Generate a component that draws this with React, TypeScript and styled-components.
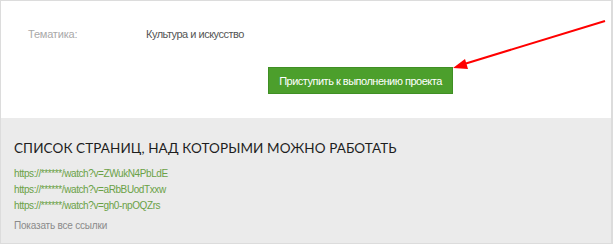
import styled, { createGlobalStyle } from 'styled-components';

const GlobalStyle = createGlobalStyle`
  html, body {
    margin: 0;
    padding: 0;
    background: #ffffff;
  }
  body {
    font-family: 'Liberation Sans', Arial, sans-serif;
  }
`;

const Frame = styled.div`
  position: relative;
  width: 613px;
  height: 244px;
  box-sizing: border-box;
  border: 1px solid #dcdcdc;
  border-right-width: 2px;
  display: flex;
  flex-direction: column;
  overflow: hidden;
`;

const Details = styled.section`
  height: 117px;
  background: #ffffff;
  padding: 25px 0 0 27px;
  box-sizing: border-box;
  display: flex;
  flex-direction: column;
`;

const InfoRow = styled.div`
  display: flex;
  align-items: baseline;
  font-size: 11px;
  line-height: 16px;
`;

const Label = styled.span`
  width: 118px;
  color: #a9a9a9;
  letter-spacing: -0.2px;
`;

const Value = styled.span`
  color: #555555;
  letter-spacing: -0.5px;
`;

const Actions = styled.div`
  display: flex;
  padding-left: 240px;
  margin-top: 25px;
`;

const StartButton = styled.button`
  height: 27px;
  width: 185px;
  padding: 0;
  background: #4c9f2c;
  border: 1px solid #3f8f24;
  color: #ffffff;
  font-family: 'Liberation Sans', Arial, sans-serif;
  font-size: 11px;
  letter-spacing: -0.5px;
  white-space: nowrap;
  cursor: pointer;
`;

const Pages = styled.section`
  flex: 1;
  background: #ebebeb;
  padding: 21px 0 0 13px;
  display: flex;
  flex-direction: column;
`;

const Heading = styled.h2`
  margin: 0 0 9px;
  font-family: Lato, 'DejaVu Sans', sans-serif;
  font-weight: normal;
  font-size: 13.5px;
  letter-spacing: 0.1px;
  color: #1e1e1e;
  line-height: 18px;
`;

const LinkList = styled.ul`
  list-style: none;
  margin: 0;
  padding: 0;
  display: flex;
  flex-direction: column;
`;

const PageLink = styled.a`
  display: block;
  font-family: 'Liberation Sans', Arial, sans-serif;
  font-size: 10px;
  letter-spacing: -0.4px;
  line-height: 16px;
  color: #6aa146;
  text-decoration: none;
`;

const ShowAll = styled.a`
  margin-top: 5px;
  font-family: 'Liberation Sans', Arial, sans-serif;
  font-size: 10px;
  letter-spacing: -0.2px;
  line-height: 14px;
  color: #8a8a8a;
  cursor: pointer;
`;

const Arrow = styled.svg`
  position: absolute;
  left: 0;
  top: 0;
  pointer-events: none;
`;

const links = [
  'https://******/watch?v=ZWukN4PbLdE',
  'https://******/watch?v=aRbBUodTxxw',
  'https://******/watch?v=gh0-npOQZrs',
];

export default function App() {
  return (
    <>
      <GlobalStyle />
      <Frame>
        <Details>
          <InfoRow>
            <Label>Тематика:</Label>
            <Value>Культура и искусство</Value>
          </InfoRow>
          <Actions>
            <StartButton>Приступить к выполнению проекта</StartButton>
          </Actions>
        </Details>
        <Pages>
          <Heading>СПИСОК СТРАНИЦ, НАД КОТОРЫМИ МОЖНО РАБОТАТЬ</Heading>
          <LinkList>
            {links.map((l) => (
              <li key={l}>
                <PageLink href="#">{l}</PageLink>
              </li>
            ))}
          </LinkList>
          <ShowAll>Показать все ссылки</ShowAll>
        </Pages>
        <Arrow width="613" height="244">
          <line x1="604" y1="20" x2="460" y2="64" stroke="#ff0000" strokeWidth="2" />
          <polygon points="452,67 464,58 467,68" fill="#ff0000" />
        </Arrow>
      </Frame>
    </>
  );
}
